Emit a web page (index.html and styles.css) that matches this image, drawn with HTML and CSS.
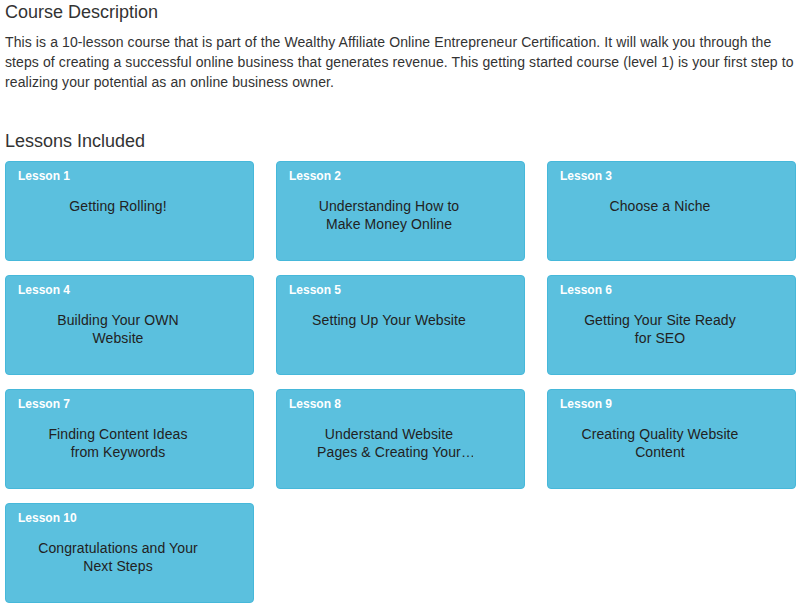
FILE: index.html
```html
<!DOCTYPE html>
<html lang="en">
<head>
    <meta charset="UTF-8">
    <meta name="viewport" content="width=device-width, initial-scale=1.0">
    <title>Course Description</title>
    <link rel="stylesheet" href="styles.css">
</head>
<body>
    <div class="course">
        <h2>Course Description</h2>
        <p class="summary">This is a 10-lesson course that is part of the Wealthy Affiliate Online Entrepreneur Certification. It will walk you through the steps of creating a successful online business that generates revenue. This getting started course (level 1) is your first step to realizing your potential as an online business owner.</p>

        <h2 class="lessons-title">Lessons Included</h2>
        <div class="lessons">
            <div class="lesson"><div class="lesson-num">Lesson 1</div><div class="lesson-name">Getting Rolling!</div></div>
            <div class="lesson"><div class="lesson-num">Lesson 2</div><div class="lesson-name">Understanding How to Make Money Online</div></div>
            <div class="lesson"><div class="lesson-num">Lesson 3</div><div class="lesson-name">Choose a Niche</div></div>
            <div class="lesson"><div class="lesson-num">Lesson 4</div><div class="lesson-name">Building Your OWN Website</div></div>
            <div class="lesson"><div class="lesson-num">Lesson 5</div><div class="lesson-name">Setting Up Your Website</div></div>
            <div class="lesson"><div class="lesson-num">Lesson 6</div><div class="lesson-name">Getting Your Site Ready for SEO</div></div>
            <div class="lesson"><div class="lesson-num">Lesson 7</div><div class="lesson-name">Finding Content Ideas from Keywords</div></div>
            <div class="lesson"><div class="lesson-num">Lesson 8</div><div class="lesson-name">Understand Website Pages &amp; Creating Your First Posts</div></div>
            <div class="lesson"><div class="lesson-num">Lesson 9</div><div class="lesson-name">Creating Quality Website Content</div></div>
            <div class="lesson"><div class="lesson-num">Lesson 10</div><div class="lesson-name">Congratulations and Your Next Steps</div></div>
        </div>
    </div>
</body>
</html>
```

FILE: styles.css
```css
body {
    margin: 0;
    font-family: "Liberation Sans", Arial, sans-serif;
    color: #333;
    background-color: #fff;
}
.course {
    padding: 2px 5px 0 5px;
    width: 793px;
}
.course h2 {
    font-size: 18px;
    font-weight: normal;
    line-height: 20px;
    margin: 0;
}
.summary {
    font-size: 14px;
    line-height: 20px;
    letter-spacing: 0.1px;
    margin: 10px 0 0 0;
}
.course .lessons-title {
    margin-top: 39px;
}
.lessons {
    display: grid;
    grid-template-columns: repeat(3, 249px);
    gap: 14px 22px;
    margin-top: 10px;
}
.lesson {
    box-sizing: border-box;
    height: 100px;
    background-color: #5bc0de;
    border: 1px solid #46b8da;
    border-radius: 4px;
    padding: 6px 12px 0 12px;
}
.lesson-num {
    color: #fff;
    font-size: 12px;
    font-weight: bold;
    line-height: 16px;
}
.lesson-name {
    color: #222;
    font-size: 14px;
    line-height: 18px;
    letter-spacing: 0.1px;
    text-align: center;
    width: 168px;
    margin: 13px 0 0 16px;
    display: -webkit-box;
    -webkit-line-clamp: 2;
    -webkit-box-orient: vertical;
    overflow: hidden;
}
```
